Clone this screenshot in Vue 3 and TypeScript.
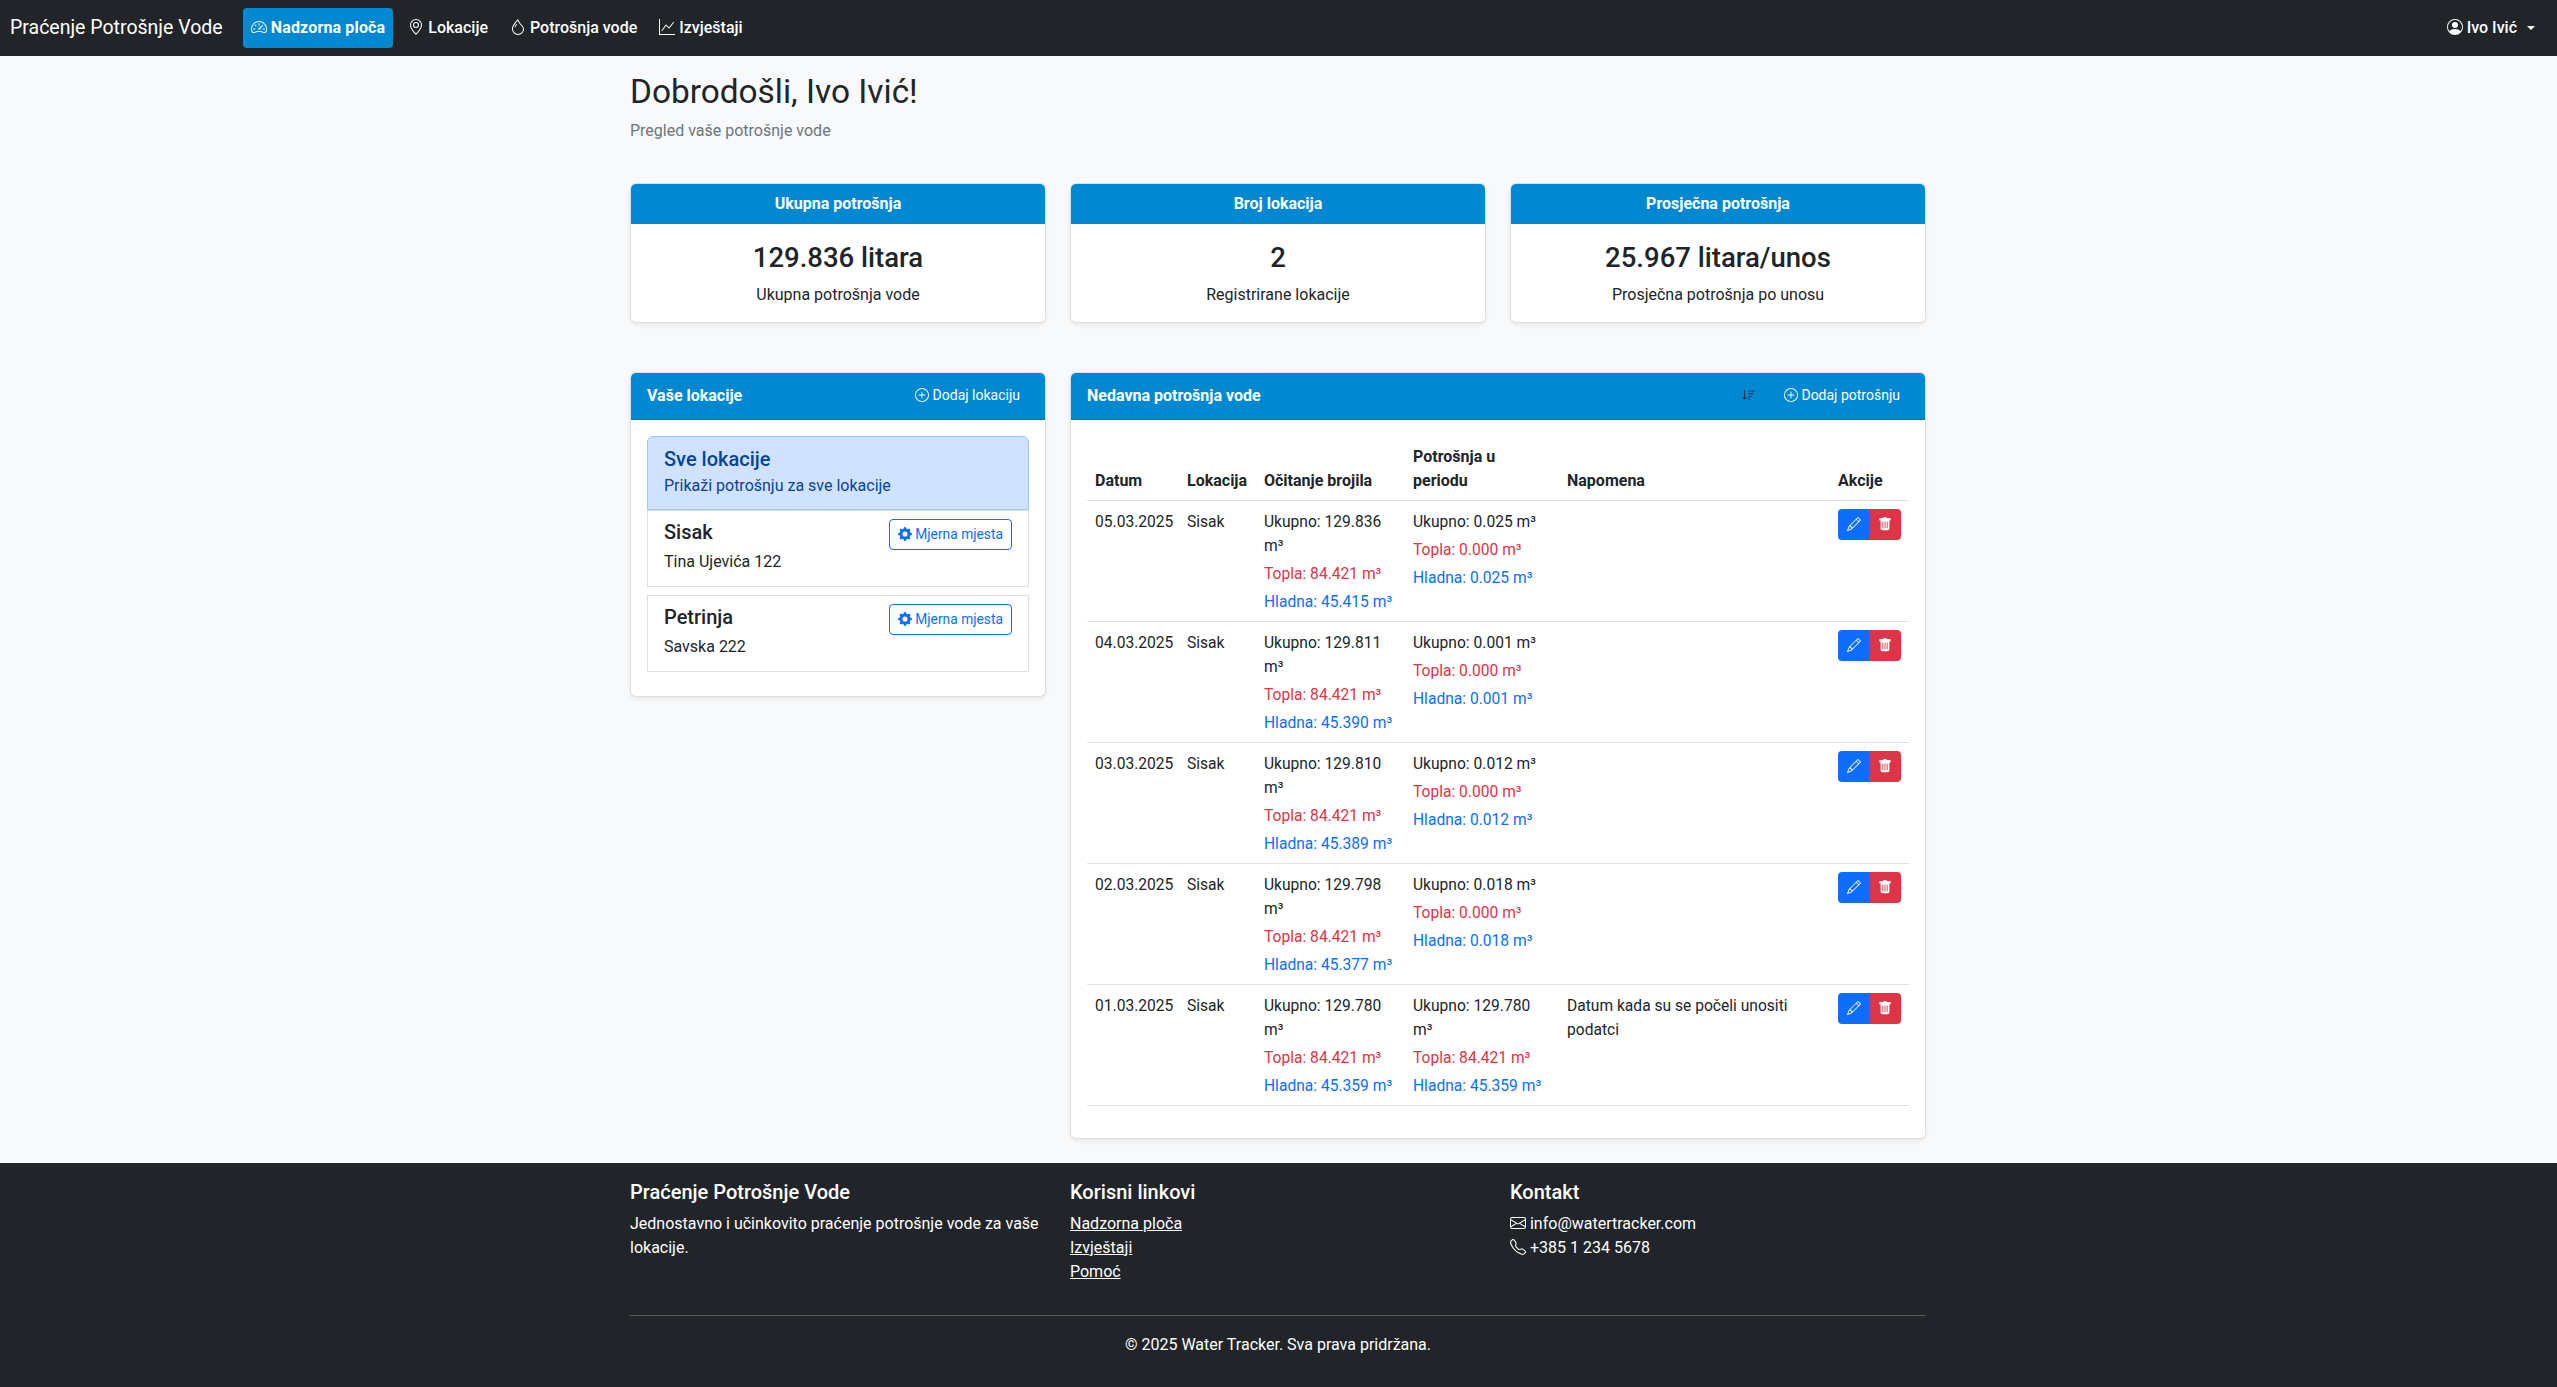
<script setup lang="ts">
type Reading = {
  date: string
  total: string
  warm: string
  cold: string
  useTotal: string
  useWarm: string
  useCold: string
  note: string
}

const stats = [
  { title: 'Ukupna potrošnja', value: '129.836 litara', label: 'Ukupna potrošnja vode' },
  { title: 'Broj lokacija', value: '2', label: 'Registrirane lokacije' },
  { title: 'Prosječna potrošnja', value: '25.967 litara/unos', label: 'Prosječna potrošnja po unosu' },
]

const places = [
  { name: 'Sisak', address: 'Tina Ujevića 122' },
  { name: 'Petrinja', address: 'Savska 222' },
]

const readings: Reading[] = [
  { date: '05.03.2025', total: '129.836', warm: '84.421', cold: '45.415', useTotal: '0.025', useWarm: '0.000', useCold: '0.025', note: '' },
  { date: '04.03.2025', total: '129.811', warm: '84.421', cold: '45.390', useTotal: '0.001', useWarm: '0.000', useCold: '0.001', note: '' },
  { date: '03.03.2025', total: '129.810', warm: '84.421', cold: '45.389', useTotal: '0.012', useWarm: '0.000', useCold: '0.012', note: '' },
  { date: '02.03.2025', total: '129.798', warm: '84.421', cold: '45.377', useTotal: '0.018', useWarm: '0.000', useCold: '0.018', note: '' },
  { date: '01.03.2025', total: '129.780', warm: '84.421', cold: '45.359', useTotal: '129.780', useWarm: '84.421', useCold: '45.359', note: 'Datum kada su se počeli unositi podatci' },
]
</script>

<template>
  <div class="page">
    <nav class="navbar">
      <a class="brand">Praćenje Potrošnje Vode</a>
      <div class="nav-links">
        <a class="nav-link active">
          <svg class="bi" viewBox="0 0 16 16"><path d="M8 4a.5.5 0 0 1 .5.5V6a.5.5 0 0 1-1 0V4.5A.5.5 0 0 1 8 4M3.732 5.732a.5.5 0 0 1 .707 0l.915.914a.5.5 0 1 1-.708.708l-.914-.915a.5.5 0 0 1 0-.707M2 10a.5.5 0 0 1 .5-.5h1.586a.5.5 0 0 1 0 1H2.5A.5.5 0 0 1 2 10m9.5 0a.5.5 0 0 1 .5-.5h1.5a.5.5 0 0 1 0 1H12a.5.5 0 0 1-.5-.5m.754-4.246a.39.39 0 0 0-.527-.02L7.547 9.31a.91.91 0 1 0 1.302 1.258l3.434-4.297a.39.39 0 0 0-.029-.518z"/><path fill-rule="evenodd" d="M0 10a8 8 0 1 1 15.547 2.661c-.442 1.253-1.845 1.602-2.932 1.25C11.309 13.488 9.475 13 8 13c-1.474 0-3.31.488-4.615.911-1.087.352-2.49.003-2.932-1.25A8 8 0 0 1 0 10m8-7a7 7 0 0 0-6.603 9.329c.203.575.923.876 1.68.63C4.397 12.533 6.358 12 8 12s3.604.532 4.923.96c.757.245 1.477-.056 1.68-.631A7 7 0 0 0 8 3"/></svg>
          Nadzorna ploča
        </a>
        <a class="nav-link">
          <svg class="bi" viewBox="0 0 16 16"><path d="M12.166 8.94c-.524 1.062-1.234 2.12-1.96 3.07A32 32 0 0 1 8 14.58a32 32 0 0 1-2.206-2.57c-.726-.95-1.436-2.008-1.96-3.07C3.304 7.867 3 6.862 3 6a5 5 0 0 1 10 0c0 .862-.305 1.867-.834 2.94M8 16s6-5.686 6-10A6 6 0 0 0 2 6c0 4.314 6 10 6 10"/><path d="M8 8a2 2 0 1 1 0-4 2 2 0 0 1 0 4m0 1a3 3 0 1 0 0-6 3 3 0 0 0 0 6"/></svg>
          Lokacije
        </a>
        <a class="nav-link">
          <svg class="bi" viewBox="0 0 16 16"><path fill-rule="evenodd" d="M7.21.8C7.69.295 8 0 8 0q.164.544.371 1.038c.812 1.946 2.073 3.35 3.197 4.6C12.878 7.096 14 8.345 14 10a6 6 0 0 1-12 0C2 6.668 5.58 2.517 7.21.8m.413 1.021A31 31 0 0 0 5.794 3.99c-.726.95-1.436 2.008-1.96 3.07C3.304 8.133 3 9.138 3 10a5 5 0 0 0 10 0c0-1.201-.796-2.157-2.181-3.7l-.03-.032C9.75 5.11 8.5 3.72 7.623 1.82z"/><path fill-rule="evenodd" d="M4.553 7.776c.82-1.641 1.717-2.753 2.093-3.13l.708.708c-.29.29-1.128 1.311-1.907 2.87z"/></svg>
          Potrošnja vode
        </a>
        <a class="nav-link">
          <svg class="bi" viewBox="0 0 16 16"><path fill-rule="evenodd" d="M0 0h1v15h15v1H0zm14.817 3.113a.5.5 0 0 1 .07.704l-4.5 5.5a.5.5 0 0 1-.74.037L7.06 6.767l-3.656 5.027a.5.5 0 0 1-.808-.588l4-5.5a.5.5 0 0 1 .758-.06l2.609 2.61 4.15-5.073a.5.5 0 0 1 .704-.07"/></svg>
          Izvještaji
        </a>
      </div>
      <a class="nav-link user">
        <svg class="bi" viewBox="0 0 16 16"><path d="M11 6a3 3 0 1 1-6 0 3 3 0 0 1 6 0"/><path fill-rule="evenodd" d="M0 8a8 8 0 1 1 16 0A8 8 0 0 1 0 8m8-7a7 7 0 0 0-5.468 11.37C3.242 11.226 4.805 10 8 10s4.757 1.225 5.468 2.37A7 7 0 0 0 8 1"/></svg>
        Ivo Ivić
        <span class="caret"></span>
      </a>
    </nav>

    <main class="container">
      <h2 class="welcome">Dobrodošli, Ivo Ivić!</h2>
      <p class="lead-text">Pregled vaše potrošnje vode</p>

      <div class="grid stats">
        <section v-for="s in stats" :key="s.title" class="card">
          <header class="stat-head">{{ s.title }}</header>
          <div class="stat-body">
            <h3>{{ s.value }}</h3>
            <p>{{ s.label }}</p>
          </div>
        </section>
      </div>

      <div class="grid lower">
        <section class="card places">
          <header class="card-head">
            <h5>Vaše lokacije</h5>
            <a class="head-btn">
              <svg class="bi sm" viewBox="0 0 16 16"><path d="M8 15A7 7 0 1 1 8 1a7 7 0 0 1 0 14m0 1A8 8 0 1 0 8 0a8 8 0 0 0 0 16"/><path d="M8 4a.5.5 0 0 1 .5.5v3h3a.5.5 0 0 1 0 1h-3v3a.5.5 0 0 1-1 0v-3h-3a.5.5 0 0 1 0-1h3v-3A.5.5 0 0 1 8 4"/></svg>
              Dodaj lokaciju
            </a>
          </header>
          <div class="card-body">
            <div class="all-places">
              <h5>Sve lokacije</h5>
              <small>Prikaži potrošnju za sve lokacije</small>
            </div>
            <div v-for="p in places" :key="p.name" class="place">
              <div class="place-top">
                <h5>{{ p.name }}</h5>
                <a class="outline-btn">
                  <svg class="bi sm" viewBox="0 0 16 16"><path d="M9.405 1.05c-.413-1.4-2.397-1.4-2.81 0l-.1.34a1.464 1.464 0 0 1-2.105.872l-.31-.17c-1.283-.698-2.686.705-1.987 1.987l.169.311c.446.82.023 1.841-.872 2.105l-.34.1c-1.4.413-1.4 2.397 0 2.81l.34.1a1.464 1.464 0 0 1 .872 2.105l-.17.31c-.698 1.283.705 2.686 1.987 1.987l.311-.169a1.464 1.464 0 0 1 2.105.872l.1.34c.413 1.4 2.397 1.4 2.81 0l.1-.34a1.464 1.464 0 0 1 2.105-.872l.31.17c1.283.698 2.686-.705 1.987-1.987l-.169-.311a1.464 1.464 0 0 1 .872-2.105l.34-.1c1.4-.413 1.4-2.397 0-2.81l-.34-.1a1.464 1.464 0 0 1-.872-2.105l.17-.31c.698-1.283-.705-2.686-1.987-1.987l-.311.169a1.464 1.464 0 0 1-2.105-.872zM8 10.93a2.929 2.929 0 1 1 0-5.86 2.929 2.929 0 0 1 0 5.858z"/></svg>
                  Mjerna mjesta
                </a>
              </div>
              <p>{{ p.address }}</p>
            </div>
          </div>
        </section>

        <section class="card recent">
          <header class="card-head">
            <h5>Nedavna potrošnja vode</h5>
            <div class="head-actions">
              <a class="sort-btn">
                <svg class="bi sm" viewBox="0 0 16 16"><path d="M3.5 2.5a.5.5 0 0 0-1 0v8.793l-1.146-1.147a.5.5 0 0 0-.708.708l2 1.999.007.007a.497.497 0 0 0 .7-.006l2-2a.5.5 0 0 0-.707-.708L3.5 11.293zm3.5 1a.5.5 0 0 1 .5-.5h7a.5.5 0 0 1 0 1h-7a.5.5 0 0 1-.5-.5M7.5 6a.5.5 0 0 0 0 1h5a.5.5 0 0 0 0-1zm0 3a.5.5 0 0 0 0 1h3a.5.5 0 0 0 0-1zm0 3a.5.5 0 0 0 0 1h1a.5.5 0 0 0 0-1z"/></svg>
              </a>
              <a class="head-btn">
                <svg class="bi sm" viewBox="0 0 16 16"><path d="M8 15A7 7 0 1 1 8 1a7 7 0 0 1 0 14m0 1A8 8 0 1 0 8 0a8 8 0 0 0 0 16"/><path d="M8 4a.5.5 0 0 1 .5.5v3h3a.5.5 0 0 1 0 1h-3v3a.5.5 0 0 1-1 0v-3h-3a.5.5 0 0 1 0-1h3v-3A.5.5 0 0 1 8 4"/></svg>
                Dodaj potrošnju
              </a>
            </div>
          </header>
          <div class="card-body">
            <table>
              <thead>
                <tr>
                  <th class="c-date">Datum</th>
                  <th class="c-place">Lokacija</th>
                  <th class="c-meter">Očitanje brojila</th>
                  <th class="c-use">Potrošnja u periodu</th>
                  <th>Napomena</th>
                  <th class="c-act">Akcije</th>
                </tr>
              </thead>
              <tbody>
                <tr v-for="r in readings" :key="r.date">
                  <td>{{ r.date }}</td>
                  <td>Sisak</td>
                  <td class="td-val">
                    <div class="val">Ukupno: {{ r.total }} m³</div>
                    <div class="val warm">Topla: {{ r.warm }} m³</div>
                    <div class="val cold">Hladna: {{ r.cold }} m³</div>
                  </td>
                  <td class="td-val wide">
                    <div class="val">Ukupno: {{ r.useTotal }} m³</div>
                    <div class="val warm">Topla: {{ r.useWarm }} m³</div>
                    <div class="val cold">Hladna: {{ r.useCold }} m³</div>
                  </td>
                  <td>{{ r.note }}</td>
                  <td class="td-act">
                    <div class="btn-group">
                      <a class="act edit">
                        <svg class="bi sm" viewBox="0 0 16 16"><path d="M12.146.146a.5.5 0 0 1 .708 0l3 3a.5.5 0 0 1 0 .708l-10 10a.5.5 0 0 1-.168.11l-5 2a.5.5 0 0 1-.65-.65l2-5a.5.5 0 0 1 .11-.168zM11.207 2.5 13.5 4.793 14.793 3.5 12.5 1.207zm1.586 3L10.5 3.207 4 9.707V10h.5a.5.5 0 0 1 .5.5v.5h.5a.5.5 0 0 1 .5.5v.5h.293zm-9.761 5.175-.106.106-1.528 3.821 3.821-1.528.106-.106A.5.5 0 0 1 5 12.5V12h-.5a.5.5 0 0 1-.5-.5V11h-.5a.5.5 0 0 1-.468-.325"/></svg>
                      </a>
                      <a class="act del">
                        <svg class="bi sm" viewBox="0 0 16 16"><path d="M2.5 1a1 1 0 0 0-1 1v1a1 1 0 0 0 1 1H3v9a2 2 0 0 0 2 2h6a2 2 0 0 0 2-2V4h.5a1 1 0 0 0 1-1V2a1 1 0 0 0-1-1H10a1 1 0 0 0-1-1H7a1 1 0 0 0-1 1zm3 4a.5.5 0 0 1 .5.5v7a.5.5 0 0 1-1 0v-7a.5.5 0 0 1 .5-.5M8 5a.5.5 0 0 1 .5.5v7a.5.5 0 0 1-1 0v-7A.5.5 0 0 1 8 5m3 .5v7a.5.5 0 0 1-1 0v-7a.5.5 0 0 1 1 0"/></svg>
                      </a>
                    </div>
                  </td>
                </tr>
              </tbody>
            </table>
          </div>
        </section>
      </div>
    </main>

    <footer class="footer">
      <div class="footer-inner">
        <div class="grid foot-cols">
          <div>
            <h5>Praćenje Potrošnje Vode</h5>
            <p>Jednostavno i učinkovito praćenje potrošnje vode za vaše lokacije.</p>
          </div>
          <div>
            <h5>Korisni linkovi</h5>
            <ul>
              <li><a>Nadzorna ploča</a></li>
              <li><a>Izvještaji</a></li>
              <li><a>Pomoć</a></li>
            </ul>
          </div>
          <div>
            <h5>Kontakt</h5>
            <p>
              <svg class="bi" viewBox="0 0 16 16"><path d="M0 4a2 2 0 0 1 2-2h12a2 2 0 0 1 2 2v8a2 2 0 0 1-2 2H2a2 2 0 0 1-2-2zm2-1a1 1 0 0 0-1 1v.217l7 4.2 7-4.2V4a1 1 0 0 0-1-1zm13 2.383-4.708 2.825L15 11.105zm-.034 6.876-5.64-3.471L8 9.583l-1.326-.795-5.64 3.47A1 1 0 0 0 2 13h12a1 1 0 0 0 .966-.741M1 11.105l4.708-2.897L1 5.383z"/></svg>
              info@watertracker.com<br>
              <svg class="bi" viewBox="0 0 16 16"><path d="M3.654 1.328a.678.678 0 0 0-1.015-.063L1.605 2.3c-.483.484-.661 1.169-.45 1.77a17.6 17.6 0 0 0 4.168 6.608 17.6 17.6 0 0 0 6.608 4.168c.601.211 1.286.033 1.77-.45l1.034-1.034a.678.678 0 0 0-.063-1.015l-2.307-1.794a.68.68 0 0 0-.58-.122l-2.19.547a1.75 1.75 0 0 1-1.657-.459L5.482 8.062a1.75 1.75 0 0 1-.46-1.657l.548-2.19a.68.68 0 0 0-.122-.58zM1.884.511a1.745 1.745 0 0 1 2.612.163L6.29 2.98c.329.423.445.974.315 1.494l-.547 2.19a.68.68 0 0 0 .178.643l2.457 2.457a.68.68 0 0 0 .644.178l2.189-.547a1.75 1.75 0 0 1 1.494.315l2.306 1.794c.829.645.905 1.87.163 2.611l-1.034 1.034c-.74.74-1.846 1.065-2.877.702a18.6 18.6 0 0 1-7.01-4.42 18.6 18.6 0 0 1-4.42-7.009c-.362-1.03-.037-2.137.703-2.877z"/></svg>
              +385 1 234 5678
            </p>
          </div>
        </div>
        <hr>
        <p class="copy">© 2025 Water Tracker. Sva prava pridržana.</p>
      </div>
    </footer>
  </div>
</template>

<style>
body {
  margin: 0;
  background: #f8f9fa;
}
</style>

<style scoped>
.page {
  font-family: Roboto, "Liberation Sans", sans-serif;
  font-size: 16px;
  line-height: 1.5;
  color: #212529;
  min-height: 1387px;
  display: flex;
  flex-direction: column;
}

h2, h3, h5, p, ul {
  margin: 0;
  padding: 0;
}

a {
  color: inherit;
}

.bi {
  width: 16px;
  height: 16px;
  fill: currentColor;
  display: inline-block;
  vertical-align: -2px;
}

.bi.sm {
  width: 14px;
  height: 14px;
}

/* navbar */
.navbar {
  height: 56px;
  background: #212529;
  color: #fff;
  display: flex;
  align-items: center;
  padding: 0 14px 0 10px;
  box-sizing: border-box;
}

.brand {
  font-size: 19.5px;
  margin-right: 20px;
}

.nav-links {
  display: flex;
  flex: 1;
  gap: 6px;
}

.nav-link {
  padding: 8px;
  font-weight: 500;
  border-radius: 4px;
  white-space: nowrap;
}

.nav-link.active {
  background: #0288d1;
  font-weight: 700;
  letter-spacing: 0.15px;
  margin-right: 1px;
}

.caret {
  display: inline-block;
  margin-left: 6px;
  vertical-align: 3px;
  border-top: 4.8px solid #fff;
  border-left: 4.8px solid transparent;
  border-right: 4.8px solid transparent;
}

/* main */
.container {
  width: 1297px;
  box-sizing: border-box;
  padding: 17px 1px 0 0;
  margin: 0 auto;
  flex: 1;
}

.welcome {
  font-size: 33.4px;
  font-weight: 450;
  line-height: 38px;
  margin-bottom: 8px;
}

.lead-text {
  color: #6c757d;
  margin-bottom: 40px;
}

.grid {
  display: grid;
  grid-template-columns: repeat(3, 416px);
  gap: 24px;
}

.stats {
  margin-bottom: 49px;
}

.card {
  background: #fff;
  border: 1px solid rgba(0, 0, 0, 0.125);
  border-radius: 6px;
  box-shadow: 0 2px 4px rgba(0, 0, 0, 0.075);
  overflow: hidden;
  align-self: start;
}

.stat-head {
  background: #0288d1;
  color: #fff;
  text-align: center;
  font-weight: 700;
  padding: 8px 16px;
}

.stat-body {
  padding: 17px 16px 15px;
  text-align: center;
}

.stat-body h3 {
  font-size: 27.5px;
  font-weight: 500;
  line-height: 33.6px;
  margin-bottom: 8px;
}

.lower {
  margin-bottom: 24px;
}

.recent {
  grid-column: span 2;
}

.card-head {
  background: #0288d1;
  color: #fff;
  display: flex;
  align-items: center;
  justify-content: space-between;
  padding: 8px 16px;
  height: 47px;
  box-sizing: border-box;
  border-bottom: 1px solid rgba(0, 0, 0, 0.125);
}

.card-head h5 {
  font-size: 16px;
  font-weight: 700;
}

.head-actions {
  display: flex;
  align-items: center;
}

.head-btn {
  font-size: 14px;
  padding: 4px 8px;
  margin-right: 1px;
  white-space: nowrap;
}

.sort-btn {
  color: #212529;
  padding: 4px 8px;
  margin-right: 12px;
  font-size: 14px;
}

.card-body {
  padding: 16px;
}

.all-places {
  background: #cfe2ff;
  border: 1px solid #9ec5fe;
  border-radius: 6px 6px 0 0;
  color: #084298;
  padding: 10px 16px 11px;
}

.all-places h5,
.place h5 {
  font-size: 20px;
  font-weight: 500;
  line-height: 1.2;
}

.all-places h5 {
  margin-bottom: 3px;
}

.all-places small {
  display: block;
  font-size: 16px;
}

.place {
  border: 1px solid rgba(0, 0, 0, 0.125);
  padding: 8px 16px;
  margin-bottom: 8px;
}

.place h5 {
  padding-top: 1px;
}

.place-top {
  display: flex;
  justify-content: space-between;
  align-items: flex-start;
}

.place p {
  margin-bottom: 4px;
}

.outline-btn {
  color: #0d6efd;
  border: 1px solid #0d6efd;
  border-radius: 4px;
  font-size: 13.8px;
  padding: 4px 8px;
  box-sizing: border-box;
  height: 31px;
  white-space: nowrap;
}

/* table */
table {
  width: 100%;
  table-layout: fixed;
  border-collapse: collapse;
  margin-bottom: 16px;
}

th {
  box-sizing: border-box;
  text-align: left;
  vertical-align: bottom;
  padding: 9px 8px 7px;
  font-weight: 700;
  border-bottom: 1px solid #dee2e6;
}

td {
  vertical-align: top;
  font-size: 15.6px;
  line-height: 24px;
  padding: 9px 8px 7px;
  border-bottom: 1px solid #dee2e6;
}

td.td-val {
  padding-right: 10px;
}

td.td-val.wide {
  padding-right: 14px;
}

td.td-act {
  padding: 8px;
}

.c-date { width: 92px; }
.c-place { width: 77px; }
.c-meter { width: 149px; }
.c-use { width: 154px; }
.c-act { width: 79px; }

.val + .val {
  margin-top: 4px;
}

.warm {
  color: #dc3545;
}

.cold {
  color: #0d6efd;
}

.btn-group {
  display: inline-flex;
}

.act {
  height: 31px;
  width: 32px;
  color: #fff;
  display: flex;
  align-items: center;
  justify-content: center;
}

.edit {
  background: #0d6efd;
  border-radius: 4px 0 0 4px;
  width: 31px;
}

.del {
  background: #dc3545;
  border-radius: 0 4px 4px 0;
}

/* footer */
.footer {
  background: #212529;
  color: #fff;
  padding: 17px 0 32px;
}

.footer-inner {
  width: 1297px;
  box-sizing: border-box;
  padding-right: 1px;
  margin: 0 auto;
}

.footer h5 {
  font-size: 20px;
  font-weight: 500;
  line-height: 1.2;
  margin-bottom: 8px;
}

.footer ul {
  list-style: none;
  margin-bottom: 15px;
}

.footer li a {
  text-decoration: underline;
}

hr {
  border: 0;
  border-top: 1px solid rgba(255, 255, 255, 0.25);
  margin: 16px 0 17px;
}

.copy {
  text-align: center;
}
</style>
